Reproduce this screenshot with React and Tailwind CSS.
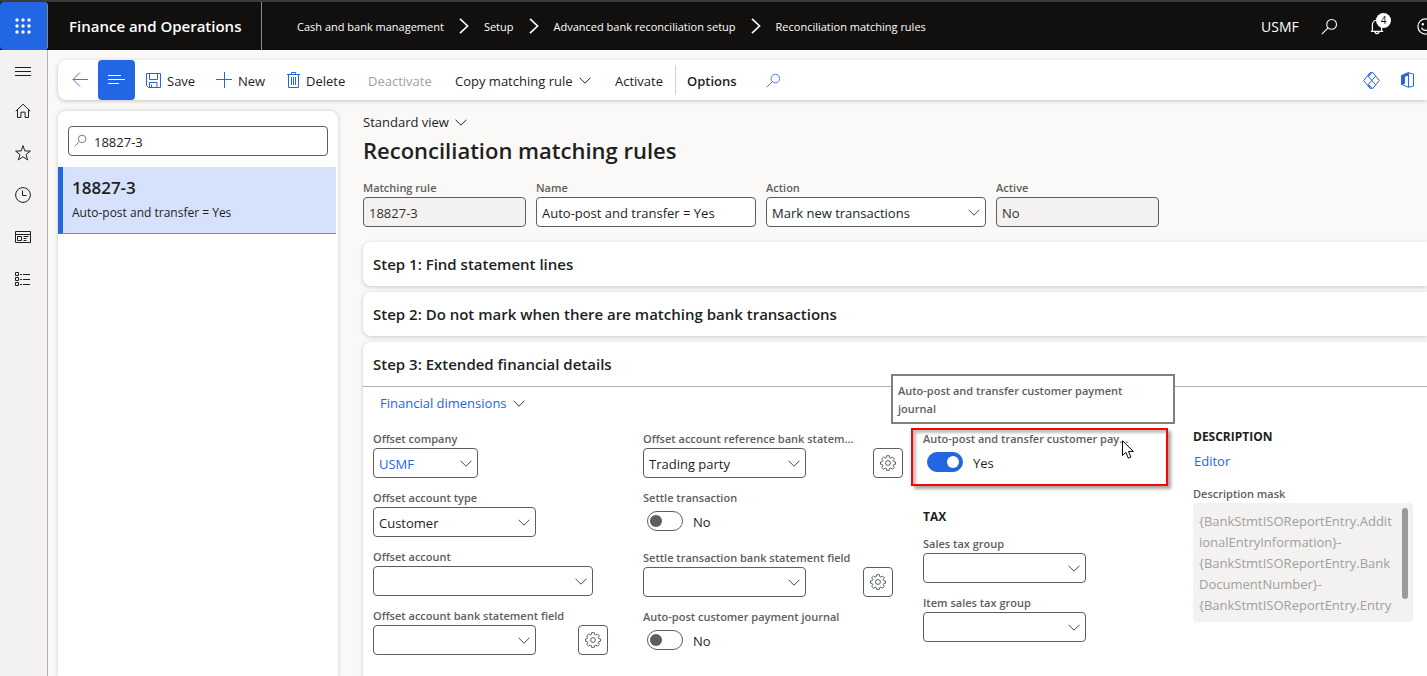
import { useId } from "react";

function Svg({ w = 16, h = 16, className = "", children, stroke = 1 }) {
  return (
    <svg width={w} height={h} viewBox={`0 0 ${w} ${h}`} className={`shrink-0 ${className}`} fill="none" stroke="currentColor" strokeWidth={stroke} aria-hidden="true">
      {children}
    </svg>
  );
}

const Chevron = ({ className = "" }) => (
  <Svg w={12} h={7} className={className}><path d="M.5 .7 6 6.2 11.5 .7" /></Svg>
);

const Search = ({ size = 16, className = "" }) => (
  <svg width={size} height={size} viewBox="0 0 16 16" className={`shrink-0 ${className}`} fill="none" stroke="currentColor" aria-hidden="true">
    <circle cx="10" cy="6" r="4.6" />
    <path d="M6.6 9.4.8 15.2" />
  </svg>
);

const Gear = () => (
  <Svg w={16} h={16}>
    <path d="M6.7 .7h2.6l.4 1.9 1.1.5 1.7-1.1 1.8 1.8-1.1 1.7.5 1.1 1.8.4v2.2l-1.8.4-.5 1.1 1.1 1.7-1.8 1.8-1.7-1.1-1.1.5-.4 1.8H6.7l-.4-1.8-1.1-.5-1.7 1.1-1.8-1.8 1.1-1.7-.5-1.1-1.8-.4V7l1.8-.4.5-1.1-1.1-1.7L3.5 2l1.7 1.1 1.1-.5z" strokeLinejoin="round" />
    <circle cx="8" cy="8" r="2.4" />
  </Svg>
);

const labelClass = "block h-[17px] max-w-[214px] truncate text-[11px] leading-[15px] font-semibold text-[#605e5c]";
const boxClass = "h-[30px] w-full rounded-[4px] border border-[#605e5c] px-[5px] pt-[2px] text-[13px] leading-5";

function TextField({ label, value, readOnly, className }) {
  const id = useId();
  return (
    <div className={className}>
      <label htmlFor={id} className={labelClass}>{label}</label>
      <input id={id} defaultValue={value} readOnly={readOnly} className={`${boxClass} ${readOnly ? "bg-[#f3f2f1] text-[#323130]" : "bg-white text-[#201f1e]"}`} />
    </div>
  );
}

function SelectField({ label, value = "", width = "w-[163px]", outer = "", color = "text-[#201f1e]", gear }) {
  const id = useId();
  return (
    <div className="flex items-end gap-[10px]">
      <div className={outer}>
        <label htmlFor={id} className={labelClass}>{label}</label>
        <div className={`relative ${width}`}>
          <select id={id} className={`${boxClass} appearance-none bg-white ${color}`} defaultValue={value}>
            <option value={value}>{value}</option>
          </select>
          <Chevron className="pointer-events-none absolute top-[12px] right-[6px] text-[#484644]" />
        </div>
      </div>
      {gear && (
        <button aria-label={`Configure ${label}`} className="flex size-[30px] items-center justify-center rounded-[4px] border border-[#605e5c] text-[#54616e]">
          <Gear />
        </button>
      )}
    </div>
  );
}

function ToggleField({ label, on, width = "w-[220px]" }) {
  const id = useId();
  return (
    <div className={width}>
      <label htmlFor={id} className={labelClass}>{label}</label>
      <div className="flex h-[31px] gap-[10px] pt-1 pl-1">
        <input
          id={id}
          type="checkbox"
          role="switch"
          defaultChecked={on}
          className="flex h-5 w-9 appearance-none items-center rounded-full border border-[#605e5c] bg-white px-[2px] before:size-3 before:rounded-full before:bg-[#605e5c] before:content-[''] checked:justify-end checked:border-[#2266e3] checked:bg-[#2266e3] checked:px-[3px] checked:before:bg-white"
        />
        <span className="text-[13px] leading-[22px] text-[#201f1e]">{on ? "Yes" : "No"}</span>
      </div>
    </div>
  );
}

function Header() {
  const crumbs = ["Cash and bank management", "Setup", "Advanced bank reconciliation setup", "Reconciliation matching rules"];
  return (
    <header className="flex h-[50px] shrink-0 border-t-2 border-[#3b3a39] bg-[#11100f] text-white">
      <button aria-label="App launcher" className="flex w-12 items-center justify-center rounded-[4px] border-r border-[#8a8886] bg-[#2266e3] pr-px">
        <svg width="16" height="16" viewBox="0 0 16 16" fill="currentColor" aria-hidden="true">
          {[2, 8, 14].map((y) => [2, 8, 14].map((x) => <circle key={`${x}-${y}`} cx={x} cy={y} r="1.7" />))}
        </svg>
      </button>
      <div className="flex w-[214px] items-center border-r border-[#8a8886] pl-[21px] text-[15px] font-semibold whitespace-nowrap">Finance and Operations</div>
      <nav aria-label="Breadcrumb" className="ml-[35px] flex items-center whitespace-nowrap">
        {crumbs.map((c, i) => (
          <span key={c} className="flex items-center">
            {i > 0 && <Svg w={10} h={16} stroke={1.6} className="mx-[15px]"><path d="M1 .8 8.6 8 1 15.2" /></Svg>}
            <a href="#" className="pt-[2px] text-[11px] font-medium">{c}</a>
          </span>
        ))}
      </nav>
      <div className="ml-auto flex w-[166px] shrink-0 items-center">
        <button className="w-[60px] text-left text-[14px]">USMF</button>
        <button aria-label="Search" className="w-[49px]"><Search size={17} /></button>
        <button aria-label="Notifications, 4" className="relative w-[47px]">
          <Svg w={14} h={17} stroke={1.2}>
            <path d="M.8 13.4h12.4M2.4 13.2V6.8a4.6 4.6 0 0 1 9.2 0v6.4M5 13.6a2 2 0 0 0 4 0" />
          </Svg>
          <span className="absolute -top-[5px] left-[6px] flex size-[15px] items-center justify-center rounded-full bg-white text-[10px] leading-none text-[#11100f]">4</span>
        </button>
        <button aria-label="Feedback" className="w-[10px] overflow-hidden">
          <Svg w={17} h={17} stroke={1.2}>
            <circle cx="8.5" cy="8.5" r="7.6" />
            <path d="M4.6 9.8a4.2 4.2 0 0 0 7.8 0" />
            <circle cx="5.8" cy="6.2" r=".6" fill="currentColor" />
            <circle cx="11.2" cy="6.2" r=".6" fill="currentColor" />
          </Svg>
        </button>
      </div>
    </header>
  );
}

function SideRail() {
  const items = [
    ["Home", <path key="p" d="M.8 8.2 8 1.2l7.2 7M2.5 6.8v7.7h3.4V9.2h4.2v5.3h3.4V6.8" />],
    ["Favorites", <path key="p" d="m8 .6 1.800 5.300 5.600.2-4.400 3.400 1.600 5.400L8 11.700l-4.600 3.200 1.600-5.400L.6 6.100l5.600-.2z" />],
    ["Recent", <g key="p"><circle cx="8" cy="8" r="7.4" /><path d="M7.5 3.5v5h4" /></g>],
    ["Workspaces", <path key="p" d="M.5 2.5h15v11H.5zM.5 5.5h15M2.5 7.5h4v4h-4zM8.5 7.5h5M8.5 9.5h3M8.5 11.5h3" />],
    ["Modules", <path key="p" d="M.5 1.5h3v3h-3zM.5 6.5h3v3h-3zM.5 11.5h3v3h-3zM5 3.5h2M8 3.5h7M5 8.5h2M8 8.5h7M5 13.5h2M8 13.5h7" />],
  ];
  return (
    <nav aria-label="Main" className="flex w-12 shrink-0 flex-col border-r border-[#b3b0ad] bg-[#f3f2f1] text-[#201f1e]">
      <button aria-label="Expand navigation" className="flex h-10 items-center justify-center pr-[2px]"><Svg><path d="M0 5.500h16M0 9.500h16M0 13.500h16" /></Svg></button>
      {items.map(([name, art]) => (
        <button key={name} aria-label={name} className="flex h-[42px] items-center justify-center pr-[2px]"><Svg>{art}</Svg></button>
      ))}
    </nav>
  );
}

function CommandBar() {
  const cmd = "flex h-full shrink-0 items-center gap-[6px] whitespace-nowrap text-left";
  const text = "pt-[3px]";
  return (
    <div role="toolbar" className="flex h-10 shrink-0 items-center rounded-l-[8px] bg-white text-[13px] text-[#201f1e] shadow-[0_1px_4px_rgba(0,0,0,0.22)]">
      <button aria-label="Back" className="flex w-10 items-center justify-center pl-1 text-[#4f6bed]"><Svg><path d="M16 7.5H1M8 .5l-7 7 7 7" /></Svg></button>
      <button aria-label="Show list" className="flex h-full w-[37px] items-center justify-center rounded-[4px] bg-[#2266e3] text-white"><Svg w={17} h={12}><path d="M0 1.5h13M0 5.5h17M0 9.5h11" /></Svg></button>
      <button className={`${cmd} ml-[11px] w-[70px]`}>
        <Svg w={15} h={15} className="text-[#2266e3]"><path d="M.5 .5h14v14h-12l-2-2zM3.5 .5v6h8v-6M3.5 14.5v-5h7.500v5M5.500 11.500v3" /></Svg><span className={text}>Save</span>
      </button>
      <button className={`${cmd} w-[71px]`}><Svg className="text-[#2266e3]"><path d="M0 7.500h16M8.500 0v16" /></Svg><span className={text}>New</span></button>
      <button className={`${cmd} w-[81px]`}>
        <Svg w={13} h={16} className="text-[#2266e3]"><path d="M0 2.500h13M1.500 2.500v13h10v-13M4.500 2.500v-2h4v2M4.500 5v8M6.500 5v8M8.500 5v8" /></Svg><span className={text}>Delete</span>
      </button>
      <button disabled className={`${cmd} w-[87px] text-[#a19f9d]`}><span className={text}>Deactivate</span></button>
      <button className={`${cmd} w-[160px]`}><span className={text}>Copy matching rule</span><Chevron /></button>
      <button className={`${cmd} w-[60px]`}><span className={text}>Activate</span></button>
      <button className="flex h-[30px] w-[91px] shrink-0 items-center border-l border-[#d2d0ce] pl-[11px] font-semibold"><span className={text}>Options</span></button>
      <button aria-label="Search commands" className="text-[#4f6bed]"><Search size={15} /></button>
      <div className="ml-auto flex shrink-0 items-center gap-[21px] pr-3 text-[#2266e3]">
        <button aria-label="Power Apps">
          <Svg w={17} h={17}>
            <path d="M10 .7H7L.7 8.500 7 16.300h3L16.300 8.500z" strokeLinejoin="round" />
            <path d="M7 .7 5.400 4.600l3.400 3.900-3.400 3.900L7 16.300M5.400 4.600 8.800 1M5.400 12.400 8.800 16M12.700 4.200 8.800 8.500l3.900 4.300" />
          </Svg>
        </button>
        <button aria-label="Open in Microsoft Office">
          <Svg w={14} h={16}><path d="M.5 3.500 7.500 .5v2.500L3.500 4.500v7L.5 12.500z" fill="currentColor" /><path d="M7.500 .8 12.500 2v12L7.500 15.300 1 12.500M7.500 2.500v12.500" /></Svg>
        </button>
      </div>
    </div>
  );
}

function RuleList() {
  return (
    <aside className="w-[280px] shrink-0 rounded-t-[8px] bg-white shadow-[0_0_4px_rgba(0,0,0,0.2)]">
      <div className="relative px-[10px] pt-[15px] pb-[11px]">
        <Search size={13} className="absolute top-[23px] left-4 text-[#605e5c]" />
        <input aria-label="Filter" defaultValue="18827-3" className="h-[30px] w-full rounded-[4px] border border-[#605e5c] bg-white pt-[2px] pl-[25px] text-[13px] text-[#201f1e]" />
      </div>
      <a href="#" className="mr-[2px] block h-[67px] border-b border-l-[5px] border-b-[#8a8886] border-l-[#2266e3] bg-[#d6e2fb] pt-[9px] pl-[9px] text-[#201f1e]">
        <span className="block text-[17px] leading-6 font-semibold">18827-3</span>
        <span className="mt-[5px] block text-[12px] leading-4">Auto-post and transfer = Yes</span>
      </a>
    </aside>
  );
}

const cardClass = "rounded-l-[8px] bg-white shadow-[0_1px_4px_rgba(0,0,0,0.2)]";
const stepClass = "block h-11 w-full pl-[10px] text-left text-[15px] font-semibold";

function Details() {
  const id = useId();
  return (
    <div className="grid grid-cols-[270px_280px_270px_1fr] pt-7 pl-[10px]">
      <div className="flex flex-col gap-3">
        <SelectField label="Offset company" value="USMF" width="w-[105px]" color="text-[#2266e3]" />
        <SelectField label="Offset account type" value="Customer" />
        <SelectField label="Offset account" width="w-[220px]" />
        <SelectField label="Offset account bank statement field" outer="w-[195px]" gear />
      </div>
      <div className="flex flex-col gap-3">
        <SelectField label="Offset account reference bank statement field" value="Trading party" outer="w-[220px]" gear />
        <ToggleField label="Settle transaction" />
        <SelectField label="Settle transaction bank statement field" outer="w-[210px]" gear />
        <ToggleField label="Auto-post customer payment journal" />
      </div>
      <div className="relative flex flex-col gap-3">
        <div className="pointer-events-none absolute -top-[3px] -left-3 h-[58px] w-[257px] border-2 border-[#fb0203] shadow-[3px_3px_3px_rgba(0,0,0,0.35),inset_3px_3px_3px_rgba(0,0,0,0.25)]" />
        <div role="tooltip" className="absolute -top-[57px] -left-8 w-[284px] border-2 border-[#808080] bg-white px-[5px] pt-[6px] pb-1 text-[11px] leading-[18px] font-semibold text-[#605e5c]">
          Auto-post and transfer customer payment<br />journal
        </div>
        <svg width="13" height="20" viewBox="0 0 13 20" className="pointer-events-none absolute top-[9px] left-[199px] z-10" aria-hidden="true">
          <path d="M.5 .8v14.700l3.400-3.200 2.400 5.800 2.600-1.100-2.400-5.600h4.900z" fill="#fff" stroke="#000" />
        </svg>
        <ToggleField label="Auto-post and transfer customer payment journal" on width="w-[212px]" />
        <div className="flex flex-col gap-3 pt-[17px]">
          <h2 className="h-4 text-[12px] leading-[18px] font-bold">TAX</h2>
          <SelectField label="Sales tax group" />
          <SelectField label="Item sales tax group" />
        </div>
      </div>
      <div>
        <h2 className="text-[12px] leading-3 font-bold">DESCRIPTION</h2>
        <a href="#" className="mt-[7px] block pl-px text-[13px] leading-[22px] text-[#2266e3]">Editor</a>
        <label htmlFor={id} className={`${labelClass} mt-[14px]`}>Description mask</label>
        <div className="relative w-[220px]">
          <textarea
            id={id}
            readOnly
            className="block h-[119px] w-full resize-none overflow-hidden rounded-[4px] bg-[#f3f2f1] px-[6px] pt-[8px] text-[13px] leading-[21px] whitespace-pre text-[#a19f9d]"
            defaultValue={"{BankStmtISOReportEntry.Addit\nionalEntryInformation}-\n{BankStmtISOReportEntry.Bank\nDocumentNumber}-\n{BankStmtISOReportEntry.Entry"}
          />
          <div className="absolute top-[5px] right-[5px] h-[91px] w-[6px] rounded-full bg-[#9b9a99]" />
        </div>
      </div>
    </div>
  );
}

export default function App() {
  return (
    <div className="flex h-screen flex-col overflow-hidden bg-[#faf9f8] font-['Segoe_UI','Open_Sans',sans-serif] text-[#201f1e]">
      <Header />
      <div className="flex min-h-0 flex-1">
        <SideRail />
        <div className="flex min-w-0 flex-1 flex-col pt-[10px] pl-[10px]">
          <CommandBar />
          <div className="flex min-h-0 flex-1 gap-[25px] pt-[11px]">
            <RuleList />
            <main className="flex min-w-0 flex-1 flex-col">
              <button className="flex h-[22px] items-center gap-[6px] text-[13px]"><span className="pt-px">Standard view</span><Chevron /></button>
              <h1 className="text-[22px] leading-[34px] font-semibold">Reconciliation matching rules</h1>
              <div className="mt-[13px] mb-[15px] flex gap-[10px]">
                <TextField label="Matching rule" value="18827-3" readOnly className="w-[163px]" />
                <TextField label="Name" value="Auto-post and transfer = Yes" className="w-[220px]" />
                <SelectField label="Action" value="Mark new transactions" width="w-[220px]" />
                <TextField label="Active" value="No" readOnly className="w-[163px]" />
              </div>
              <div className="flex min-h-0 flex-1 flex-col gap-[6px]">
                <section className={cardClass}><button className={stepClass}>Step 1: Find statement lines</button></section>
                <section className={cardClass}><button className={stepClass}>Step 2: Do not mark when there are matching bank transactions</button></section>
                <section className={`-mb-3 flex-1 ${cardClass}`}>
                  <button className={`${stepClass} rounded-none`}>Step 3: Extended financial details</button>
                  <div className="border-t border-[#b3b0ad]">
                    <button className="mt-[5px] ml-[17px] flex h-[22px] items-center gap-[6px] text-[13px] text-[#2266e3]">
                      <span className="pt-[2px]">Financial dimensions</span><Chevron className="text-[#323130]" />
                    </button>
                    <div className="-mt-[11px]"><Details /></div>
                  </div>
                </section>
              </div>
            </main>
          </div>
        </div>
      </div>
    </div>
  );
}
